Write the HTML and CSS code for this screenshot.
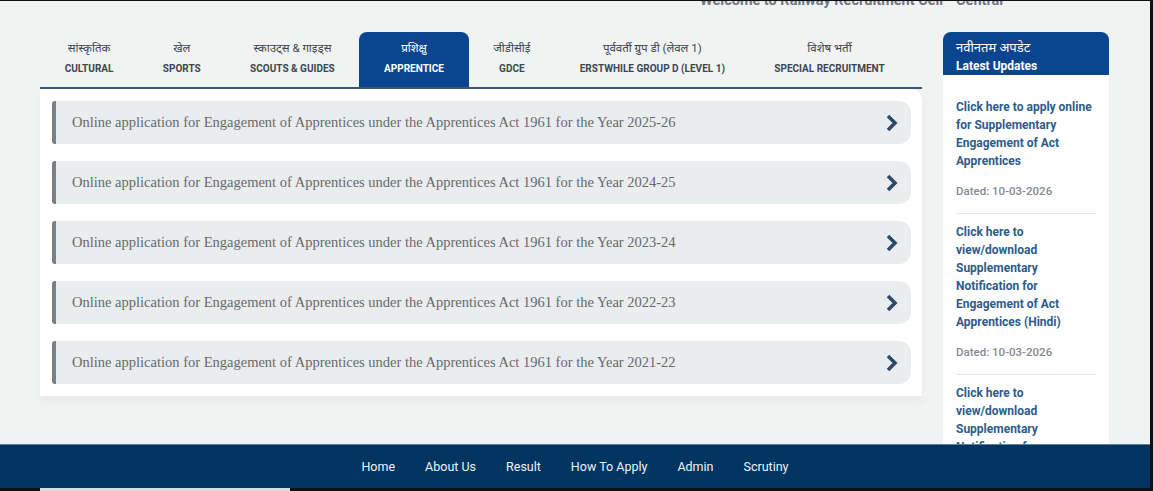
FILE: index.html
```html
<!DOCTYPE html>
<html lang="en">
<head>
    <meta charset="UTF-8">
    <meta name="viewport" content="width=device-width, initial-scale=1.0">
    <title>Apprentice - Railway Recruitment Cell</title>
    <link rel="stylesheet" href="styles.css">
</head>
<body>
    <div class="screen">
        <div class="topline">
            <span class="welcome">Welcome to Railway Recruitment Cell - Central</span>
        </div>

        <div class="main">
            <div class="content">
                <div class="tabs">
                    <a class="tab"><span class="hi">सांस्कृतिक</span><span class="en">CULTURAL</span></a>
                    <a class="tab"><span class="hi">खेल</span><span class="en">SPORTS</span></a>
                    <a class="tab"><span class="hi">स्काउट्स &amp; गाइड्स</span><span class="en">SCOUTS &amp; GUIDES</span></a>
                    <a class="tab active"><span class="hi">प्रशिक्षु</span><span class="en">APPRENTICE</span></a>
                    <a class="tab"><span class="hi">जीडीसीई</span><span class="en">GDCE</span></a>
                    <a class="tab"><span class="hi">पूर्ववर्ती ग्रुप डी (लेवल 1)</span><span class="en">ERSTWHILE GROUP D (LEVEL 1)</span></a>
                    <a class="tab"><span class="hi">विशेष भर्ती</span><span class="en">SPECIAL RECRUITMENT</span></a>
                </div>

                <div class="panel">
                    <a class="row">
                        <span>Online application for Engagement of Apprentices under the Apprentices Act 1961 for the Year 2025-26</span>
                        <svg class="chev" width="14" height="18" viewBox="0 0 14 18"><polyline points="3,2 10,9 3,16" fill="none" stroke="#2d4a6b" stroke-width="3.6"/></svg>
                    </a>
                    <a class="row">
                        <span>Online application for Engagement of Apprentices under the Apprentices Act 1961 for the Year 2024-25</span>
                        <svg class="chev" width="14" height="18" viewBox="0 0 14 18"><polyline points="3,2 10,9 3,16" fill="none" stroke="#2d4a6b" stroke-width="3.6"/></svg>
                    </a>
                    <a class="row">
                        <span>Online application for Engagement of Apprentices under the Apprentices Act 1961 for the Year 2023-24</span>
                        <svg class="chev" width="14" height="18" viewBox="0 0 14 18"><polyline points="3,2 10,9 3,16" fill="none" stroke="#2d4a6b" stroke-width="3.6"/></svg>
                    </a>
                    <a class="row">
                        <span>Online application for Engagement of Apprentices under the Apprentices Act 1961 for the Year 2022-23</span>
                        <svg class="chev" width="14" height="18" viewBox="0 0 14 18"><polyline points="3,2 10,9 3,16" fill="none" stroke="#2d4a6b" stroke-width="3.6"/></svg>
                    </a>
                    <a class="row">
                        <span>Online application for Engagement of Apprentices under the Apprentices Act 1961 for the Year 2021-22</span>
                        <svg class="chev" width="14" height="18" viewBox="0 0 14 18"><polyline points="3,2 10,9 3,16" fill="none" stroke="#2d4a6b" stroke-width="3.6"/></svg>
                    </a>
                </div>
            </div>

            <div class="updates">
                <div class="updates-head">
                    <div class="hi">नवीनतम अपडेट</div>
                    <div class="en">Latest Updates</div>
                </div>
                <div class="updates-body">
                    <div class="update">
                        <a class="update-link">Click here to apply online for Supplementary Engagement of Act Apprentices</a>
                        <div class="dated">Dated: 10-03-2026</div>
                    </div>
                    <div class="update">
                        <a class="update-link">Click here to view/download Supplementary Notification for Engagement of Act Apprentices (Hindi)</a>
                        <div class="dated">Dated: 10-03-2026</div>
                    </div>
                    <div class="update">
                        <a class="update-link">Click here to view/download Supplementary Notification for Engagement of Act Apprentices (English)</a>
                        <div class="dated">Dated: 10-03-2026</div>
                    </div>
                </div>
            </div>
        </div>

        <div class="footer">
            <a>Home</a>
            <a>About Us</a>
            <a>Result</a>
            <a>How To Apply</a>
            <a>Admin</a>
            <a>Scrutiny</a>
        </div>
    </div>
    <div class="bottom-bar"><span class="scroll-hint"></span></div>
</body>
</html>
```

FILE: styles.css
```css
body {
    margin: 0;
    background-color: #0e1114;
    font-family: Roboto, "Noto Sans", sans-serif;
}

.screen {
    width: 1150px;
    height: 487px;
    margin-top: 1px;
    background-color: #f1f3f3;
    display: flex;
    flex-direction: column;
    overflow: hidden;
}

.topline {
    height: 31px;
    overflow: hidden;
    padding-left: 700px;
}

.welcome {
    display: block;
    margin-top: -9px;
    font-size: 14.5px;
    font-weight: bold;
    color: #6d7680;
    white-space: nowrap;
}

.main {
    flex: 1;
    display: flex;
    padding-left: 40px;
    gap: 21px;
    overflow: hidden;
}

.content {
    width: 882px;
}

.tabs {
    display: flex;
    height: 55px;
    border-bottom: 2px solid #3c5670;
}

.tab {
    display: flex;
    flex-direction: column;
    align-items: center;
    padding: 0 24.7px;
    color: #3d4650;
    cursor: pointer;
}

.tab .hi {
    font-size: 11.5px;
    margin-top: 9px;
    line-height: 14px;
}

.tab .en {
    font-size: 10px;
    font-weight: bold;
    margin-top: 8px;
    line-height: 12px;
}

.tab.active {
    background-color: #0b4590;
    color: #fff;
    border-radius: 8px 8px 0 0;
}

.panel {
    background-color: #fff;
    border-top-right-radius: 12px;
    padding: 12px 11px 12px 12px;
    display: flex;
    flex-direction: column;
    gap: 17px;
    box-shadow: 0 6px 8px rgba(0, 0, 0, 0.04);
}

.row {
    height: 43px;
    display: flex;
    align-items: center;
    justify-content: space-between;
    background-color: #e9eded;
    border-left: 4px solid #7b7f82;
    border-radius: 3px 12px 12px 3px;
    padding: 0 12px 0 16px;
    font-family: "Liberation Serif", serif;
    font-size: 14.5px;
    color: #666a6e;
    cursor: pointer;
}

.chev {
    margin-top: 1px;
}

.updates {
    width: 166px;
    display: flex;
    flex-direction: column;
}

.updates-head {
    height: 54px;
    background-color: #0b4590;
    border-radius: 8px 8px 0 0;
    color: #fff;
    padding-left: 13px;
    box-sizing: border-box;
    padding-top: 7px;
}

.updates-head .hi {
    font-size: 13px;
    line-height: 17px;
}

.updates-head .en {
    font-size: 12px;
    font-weight: bold;
    line-height: 17px;
    margin-top: 2px;
}

.updates-body {
    flex: 1;
    background-color: #fff;
    padding: 14px 13px 0 13px;
}

.update {
    padding: 9px 0 13px;
    border-bottom: 1px solid #e3e6e8;
}

.update-link {
    display: block;
    font-size: 12px;
    font-weight: bold;
    line-height: 18px;
    color: #2e5b8c;
    cursor: pointer;
}

.dated {
    margin-top: 12px;
    font-size: 11.5px;
    font-weight: 500;
    line-height: 18px;
    color: #858a8f;
}

.footer {
    height: 43px;
    flex-shrink: 0;
    background-color: #003461;
    border-top: 1px solid #5f7e9c;
    display: flex;
    justify-content: center;
    align-items: center;
    gap: 30px;
}

.footer a {
    color: #eef3f8;
    font-size: 12.5px;
    cursor: pointer;
}

.bottom-bar {
    height: 3px;
    width: 1150px;
}

.scroll-hint {
    display: block;
    margin-left: 40px;
    width: 250px;
    height: 3px;
    background-color: #d9dde0;
}
```
